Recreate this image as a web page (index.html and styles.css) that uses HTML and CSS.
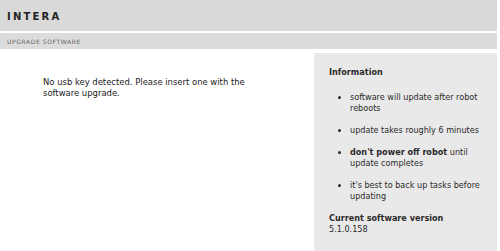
FILE: index.html
```html
<!DOCTYPE html>
<html>
<head>
<meta charset="utf-8">
<link rel="stylesheet" href="styles.css">
</head>
<body>
<div class="page">
  <header class="topbar"><span class="brand">INTERA</span></header>
  <div class="subbar"><span class="subtitle">UPGRADE SOFTWARE</span></div>
  <main class="content">
    <section class="message">
      <p>No usb key detected. Please insert one with the software upgrade.</p>
    </section>
    <aside class="info">
      <h2 class="info-title">Information</h2>
      <ul class="info-list">
        <li>software will update after robot reboots</li>
        <li>update takes roughly 6 minutes</li>
        <li><b>don't power off robot</b> until update completes</li>
        <li>it's best to back up tasks before updating</li>
      </ul>
      <div class="version">
        <div class="version-label">Current software version</div>
        <div class="version-value">5.1.0.158</div>
      </div>
    </aside>
  </main>
</div>
</body>
</html>
```
FILE: styles.css
```css
html, body {
  margin: 0;
  padding: 0;
  background: #ffffff;
}
body {
  font-family: "DejaVu Sans Condensed", "Liberation Sans", sans-serif;
  color: #2a2a2a;
}
.page {
  width: 497px;
  height: 251px;
  display: flex;
  flex-direction: column;
  overflow: hidden;
}
.topbar {
  height: 31px;
  background: #d9d9d9;
  display: flex;
  align-items: center;
  padding-left: 7px;
  margin-bottom: 2px;
}
.brand {
  font-family: "DejaVu Sans", sans-serif;
  font-weight: bold;
  font-size: 10px;
  letter-spacing: 2.2px;
  color: #222;
  padding-top: 1px;
}
.subbar {
  height: 16px;
  background: #dcdcdc;
  display: flex;
  align-items: center;
  padding-left: 7px;
  margin-bottom: 4px;
}
.subtitle {
  font-family: "DejaVu Sans", sans-serif;
  font-size: 6px;
  letter-spacing: 0.6px;
  color: #666;
}
.content {
  flex: 1;
  display: flex;
}
.message {
  flex: 1;
  padding: 23px 0 0 43px;
}
.message p {
  margin: 0;
  font-size: 9.4px;
  line-height: 11px;
  width: 240px;
  color: #222;
}
.info {
  width: 168px;
  background: #e9e9e9;
  padding: 14px 0 0 15px;
  font-size: 9px;
  line-height: 11px;
}
.info-title {
  margin: 0;
  font-size: 9px;
  font-weight: bold;
  line-height: 11px;
}
.info-list {
  margin: 14px 0 0 0;
  padding: 0 0 0 21px;
  list-style: disc;
}
.info-list li {
  margin-bottom: 11px;
  padding-left: 0;
}
.info-list b {
  font-weight: bold;
}
.version {
  margin-top: 3px;
}
.version-label {
  font-weight: bold;
}
```
